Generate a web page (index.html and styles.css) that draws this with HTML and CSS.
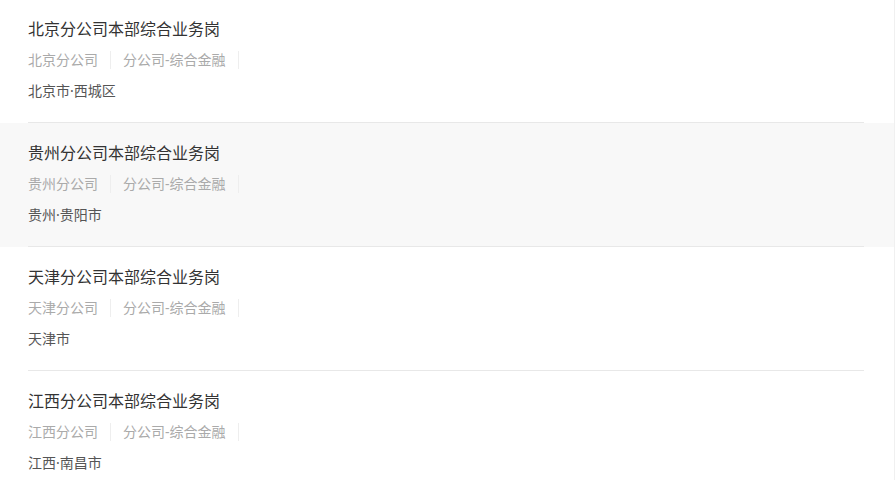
FILE: index.html
```html
<!DOCTYPE html>
<html lang="zh-CN">
<head>
    <meta charset="UTF-8">
    <meta name="viewport" content="width=device-width, initial-scale=1.0">
    <title>职位列表</title>
    <link rel="stylesheet" href="styles.css">
</head>
<body>
    <div class="job-list">
        <div class="job-item">
            <div class="job-inner">
                <div class="job-title">北京分公司本部综合业务岗</div>
                <div class="job-tags">
                    <span class="tag">北京分公司</span>
                    <span class="tag">分公司-综合金融</span>
                </div>
                <div class="job-city">北京市·西城区</div>
            </div>
        </div>
        <div class="job-item active">
            <div class="job-inner">
                <div class="job-title">贵州分公司本部综合业务岗</div>
                <div class="job-tags">
                    <span class="tag">贵州分公司</span>
                    <span class="tag">分公司-综合金融</span>
                </div>
                <div class="job-city">贵州·贵阳市</div>
            </div>
        </div>
        <div class="job-item">
            <div class="job-inner">
                <div class="job-title">天津分公司本部综合业务岗</div>
                <div class="job-tags">
                    <span class="tag">天津分公司</span>
                    <span class="tag">分公司-综合金融</span>
                </div>
                <div class="job-city">天津市</div>
            </div>
        </div>
        <div class="job-item">
            <div class="job-inner">
                <div class="job-title">江西分公司本部综合业务岗</div>
                <div class="job-tags">
                    <span class="tag">江西分公司</span>
                    <span class="tag">分公司-综合金融</span>
                </div>
                <div class="job-city">江西·南昌市</div>
            </div>
        </div>
    </div>
</body>
</html>
```

FILE: styles.css
```css
/* 职位列表 */
body { margin: 0; font-family: "Noto Sans", "Noto Sans CJK SC", sans-serif; background: #fff; }
.job-list { width: 894px; border-right: 1px solid #f0f0f0; margin-top: -1px; }
.job-item { padding: 0 30px 0 28px; }
.job-item.active { background: #f8f8f8; }
.job-inner { padding: 18px 0 21px; border-bottom: 1px solid #e8e8e8; }
.job-title { font-size: 16px; line-height: 24px; color: #333; }
.job-tags { display: flex; margin-top: 10px; font-size: 14px; line-height: 18px; color: #aaa; }
.tag { padding-right: 12px; margin-right: 12px; border-right: 1px solid #eee; }
.job-city { margin-top: 12px; font-size: 14px; line-height: 20px; color: #555; }
```
